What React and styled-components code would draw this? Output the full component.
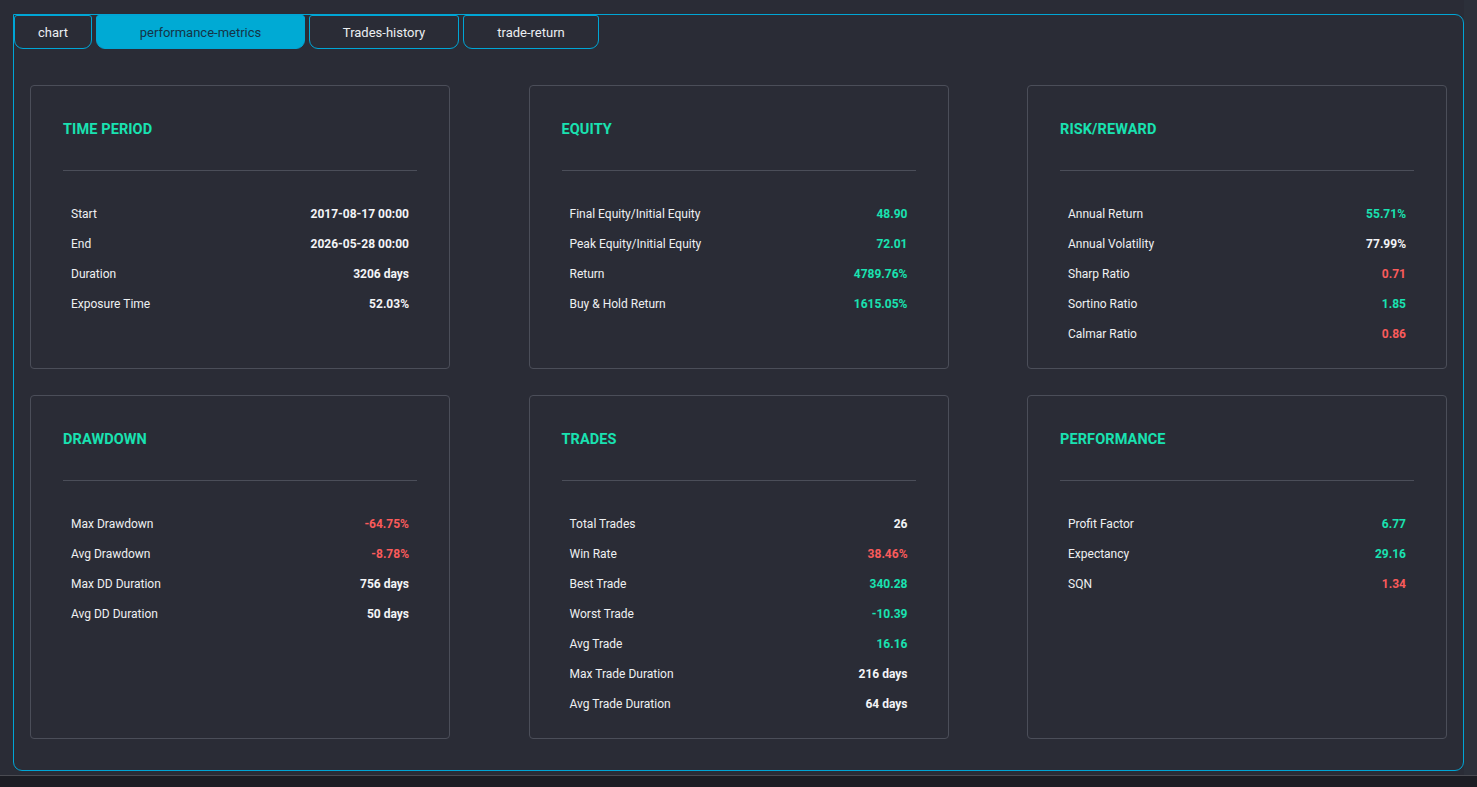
import React from "react";
import styled, { createGlobalStyle } from "styled-components";

const GlobalStyle = createGlobalStyle`
  * { box-sizing: border-box; }
  html, body { margin: 0; padding: 0; background: #1c1d24; }
  body { font-family: Roboto, "Liberation Sans", Arial, sans-serif; }
`;

const Screen = styled.div`
  width: 1477px;
  height: 787px;
  display: flex;
  flex-direction: column;
  overflow: hidden;
`;

const Top = styled.div`
  height: 775px;
  display: flex;
`;

const Main = styled.main`
  width: 1464px;
  background: #2a2c36;
  padding: 14px 0 0 13px;
`;

const SideStrip = styled.div`
  flex: 1;
  background: #2c303a;
`;

const Footer = styled.div`
  flex: 1;
  border-top: 1px solid #4a4b52;
  background: #1c1d24;
`;

const Panel = styled.section`
  width: 1451px;
  height: 757px;
  border: 1px solid #00a6d6;
  border-radius: 0 9px 9px 9px;
  display: flex;
  flex-direction: column;
`;

const TabBar = styled.div`
  display: flex;
  gap: 4px;
  height: 34px;
`;

const Tab = styled.button`
  width: ${(p) => p.$w}px;
  height: 34px;
  border: 1px solid #00a6d6;
  border-radius: 3px 3px 9px 9px;
  background: ${(p) => (p.$active ? "#00aad4" : "#2a2c36")};
  color: ${(p) => (p.$active ? "#153447" : "#eceff2")};
  font-family: Roboto, "Liberation Sans", Arial, sans-serif;
  font-size: 13px;
  font-weight: 400;
  padding: 0;
  cursor: pointer;
`;

const Grid = styled.div`
  display: grid;
  grid-template-columns: repeat(3, 420px);
  justify-content: space-between;
  align-items: stretch;
  row-gap: 26px;
  padding: 36px 16px 0 16px;
`;

const Card = styled.div`
  border: 1px solid #4b4e59;
  border-radius: 4px;
  padding: 32px 32px 19px 32px;
  display: flex;
  flex-direction: column;
`;

const Title = styled.h3`
  margin: 0;
  height: 24px;
  line-height: 24px;
  font-size: 14.5px;
  font-weight: 700;
  color: #19e2b1;
  letter-spacing: 0.1px;
`;

const Divider = styled.hr`
  margin: 28px 0 28px 0;
  border: none;
  border-top: 1px solid #4b4e59;
  height: 0;
`;

const List = styled.div`
  display: flex;
  flex-direction: column;
  padding: 0 8px;
`;

const Row = styled.div`
  height: 30px;
  display: flex;
  align-items: center;
  justify-content: space-between;
  font-size: 12px;
`;

const Label = styled.span`
  color: #eef0f2;
  font-weight: 400;
`;

const colors = { w: "#f3f4f6", g: "#19e2b1", r: "#fa5b5b" };

const Value = styled.span`
  color: ${(p) => colors[p.$c]};
  font-weight: 700;
`;

const cards = [
  {
    title: "TIME PERIOD",
    rows: [
      ["Start", "2017-08-17 00:00", "w"],
      ["End", "2026-05-28 00:00", "w"],
      ["Duration", "3206 days", "w"],
      ["Exposure Time", "52.03%", "w"],
    ],
  },
  {
    title: "EQUITY",
    rows: [
      ["Final Equity/Initial Equity", "48.90", "g"],
      ["Peak Equity/Initial Equity", "72.01", "g"],
      ["Return", "4789.76%", "g"],
      ["Buy & Hold Return", "1615.05%", "g"],
    ],
  },
  {
    title: "RISK/REWARD",
    rows: [
      ["Annual Return", "55.71%", "g"],
      ["Annual Volatility", "77.99%", "w"],
      ["Sharp Ratio", "0.71", "r"],
      ["Sortino Ratio", "1.85", "g"],
      ["Calmar Ratio", "0.86", "r"],
    ],
  },
  {
    title: "DRAWDOWN",
    rows: [
      ["Max Drawdown", "-64.75%", "r"],
      ["Avg Drawdown", "-8.78%", "r"],
      ["Max DD Duration", "756 days", "w"],
      ["Avg DD Duration", "50 days", "w"],
    ],
  },
  {
    title: "TRADES",
    rows: [
      ["Total Trades", "26", "w"],
      ["Win Rate", "38.46%", "r"],
      ["Best Trade", "340.28", "g"],
      ["Worst Trade", "-10.39", "g"],
      ["Avg Trade", "16.16", "g"],
      ["Max Trade Duration", "216 days", "w"],
      ["Avg Trade Duration", "64 days", "w"],
    ],
  },
  {
    title: "PERFORMANCE",
    rows: [
      ["Profit Factor", "6.77", "g"],
      ["Expectancy", "29.16", "g"],
      ["SQN", "1.34", "r"],
    ],
  },
];

const tabs = [
  { label: "chart", w: 78 },
  { label: "performance-metrics", w: 209, active: true },
  { label: "Trades-history", w: 150 },
  { label: "trade-return", w: 136 },
];

export default function App() {
  return (
    <Screen>
      <GlobalStyle />
      <Top>
        <Main>
          <Panel>
            <TabBar>
              {tabs.map((t) => (
                <Tab key={t.label} $w={t.w} $active={t.active}>
                  {t.label}
                </Tab>
              ))}
            </TabBar>
            <Grid>
              {cards.map((c) => (
                <Card key={c.title}>
                  <Title>{c.title}</Title>
                  <Divider />
                  <List>
                    {c.rows.map(([l, v, col]) => (
                      <Row key={l}>
                        <Label>{l}</Label>
                        <Value $c={col}>{v}</Value>
                      </Row>
                    ))}
                  </List>
                </Card>
              ))}
            </Grid>
          </Panel>
        </Main>
        <SideStrip />
      </Top>
      <Footer />
    </Screen>
  );
}
